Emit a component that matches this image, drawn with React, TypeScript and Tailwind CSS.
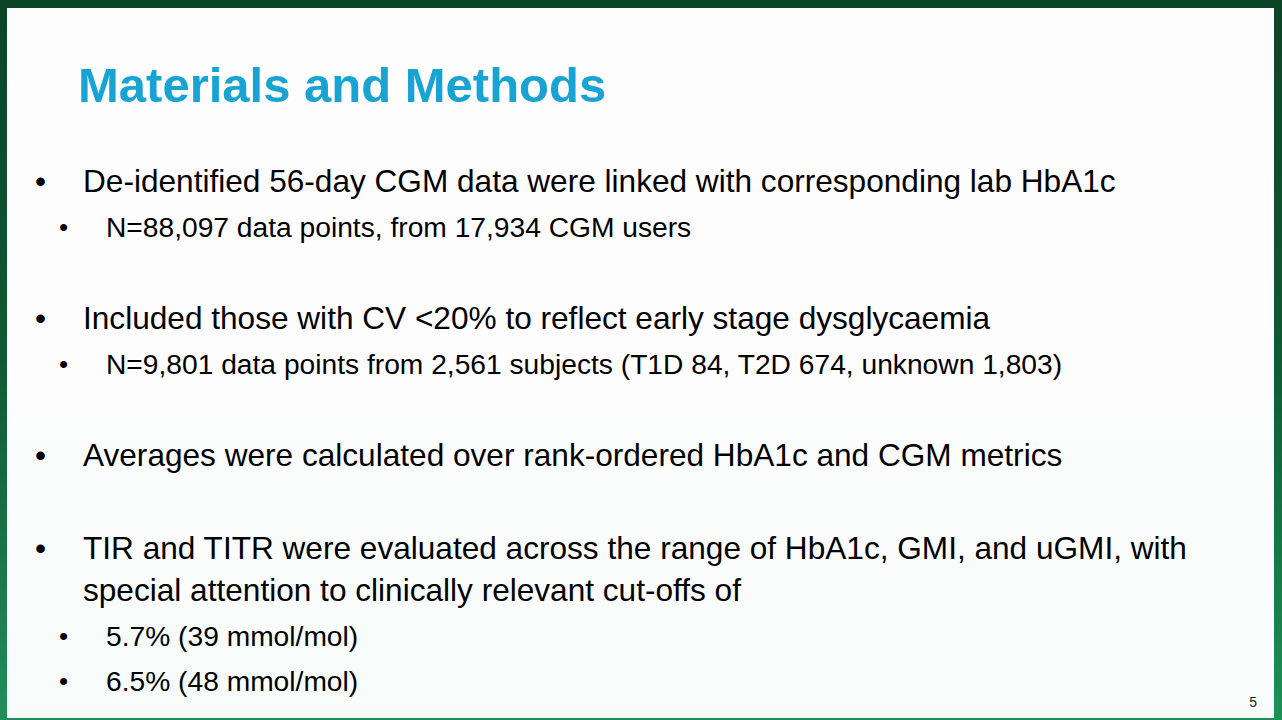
const groups = [
  {
    main: ['De-identified 56-day CGM data were linked with corresponding lab HbA1c'],
    subs: ['N=88,097 data points, from 17,934 CGM users'],
    gap: 'mt-0',
  },
  {
    main: ['Included those with CV <20% to reflect early stage dysglycaemia'],
    subs: ['N=9,801 data points from 2,561 subjects (T1D 84, T2D 674, unknown 1,803)'],
    gap: 'mt-[47px]',
  },
  {
    main: ['Averages were calculated over rank-ordered HbA1c and CGM metrics'],
    subs: [],
    gap: 'mt-[47px]',
  },
  {
    main: [
      'TIR and TITR were evaluated across the range of HbA1c, GMI, and uGMI, with',
      'special attention to clinically relevant cut-offs of',
    ],
    subs: ['5.7% (39 mmol/mol)', '6.5% (48 mmol/mol)'],
    gap: 'mt-[51px]',
  },
];

function MainPoint({ lines }: { lines: string[] }) {
  return (
    <div className="flex text-[31.6px] leading-[42px] text-black">
      <span className="w-[48px] shrink-0">•</span>
      <div>
        {lines.map((l) => (
          <div key={l}>{l}</div>
        ))}
      </div>
    </div>
  );
}

function SubPoint({ text, first }: { text: string; first: boolean }) {
  return (
    <div className={`${first ? 'mt-[3px]' : 'mt-0'} ml-[24px] flex text-[28.2px] leading-[45px] text-black`}>
      <span className="w-[47px] shrink-0 text-[26px]">•</span>
      <div>{text}</div>
    </div>
  );
}

export default function App() {
  return (
    <div
      className="h-[720px] w-[1282px] overflow-hidden bg-gradient-to-b from-[#0a4526] via-[#0f5a33] to-[#1f9059] pl-[7px] pr-[8px] pt-[8px] pb-[2px]"
      style={{ fontFamily: '"Liberation Sans", Arial, sans-serif' }}
    >
      <div className="relative h-full w-full bg-gradient-to-b from-[#fdfdfe] via-[#fdfdfd] to-[#f7fcfa]">
        <h1 className="pl-[71px] pt-[53px] text-[49px] font-bold leading-[49px] text-[#19a3d2]">
          Materials and Methods
        </h1>
        <div className="mt-[50px] pl-[28px]">
          {groups.map((g, i) => (
            <div key={i} className={g.gap}>
              <MainPoint lines={g.main} />
              {g.subs.map((s, j) => (
                <SubPoint key={s} text={s} first={j === 0} />
              ))}
            </div>
          ))}
        </div>
        <div className="absolute bottom-[9px] right-[17px] text-[14px] leading-none text-[#222]">5</div>
      </div>
    </div>
  );
}
